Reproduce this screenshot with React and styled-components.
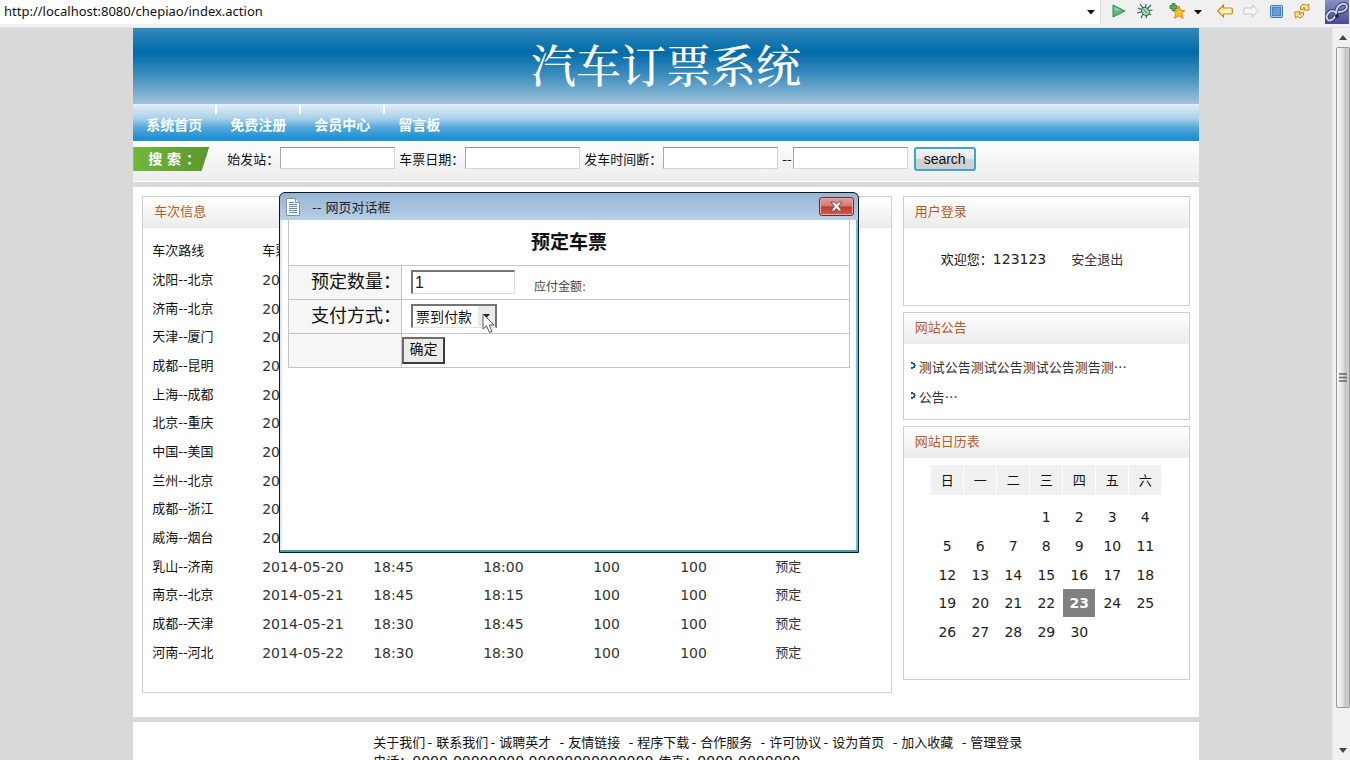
import React, { useState } from "react";
import styled, { createGlobalStyle } from "styled-components";

const NAV = ["系统首页", "免费注册", "会员中心", "留言板"];

const TICKETS = [
  ["沈阳--北京", "2014-05-20", "18:30", "18:30", 100, 100],
  ["济南--北京", "2014-05-20", "18:30", "18:30", 100, 100],
  ["天津--厦门", "2014-05-20", "18:30", "18:30", 100, 100],
  ["成都--昆明", "2014-05-20", "18:30", "18:30", 100, 100],
  ["上海--成都", "2014-05-20", "18:30", "18:30", 100, 100],
  ["北京--重庆", "2014-05-20", "18:30", "18:30", 100, 100],
  ["中国--美国", "2014-05-20", "18:30", "18:30", 100, 100],
  ["兰州--北京", "2014-05-20", "18:30", "18:30", 100, 100],
  ["成都--浙江", "2014-05-20", "18:30", "18:30", 100, 100],
  ["威海--烟台", "2014-05-20", "18:30", "18:30", 100, 100],
  ["乳山--济南", "2014-05-20", "18:45", "18:00", 100, 100],
  ["南京--北京", "2014-05-21", "18:45", "18:15", 100, 100],
  ["成都--天津", "2014-05-21", "18:30", "18:45", 100, 100],
  ["河南--河北", "2014-05-22", "18:30", "18:30", 100, 100],
];

const NOTICES = ["测试公告测试公告测试公告测告测…", "公告…"];

const WEEKDAYS = ["日", "一", "二", "三", "四", "五", "六"];

const WEEKS = [
  ["", "", "", 1, 2, 3, 4],
  [5, 6, 7, 8, 9, 10, 11],
  [12, 13, 14, 15, 16, 17, 18],
  [19, 20, 21, 22, 23, 24, 25],
  [26, 27, 28, 29, 30, "", ""],
];

const FOOTER_LINKS = [
  { text: "关于我们" },
  { text: "联系我们" },
  { text: "诚聘英才", wide: true },
  { text: "友情链接", wide: true },
  { text: "程序下载" },
  { text: "合作服务", wide: true },
  { text: "许可协议" },
  { text: "设为首页", wide: true },
  { text: "加入收藏", wide: true },
  { text: "管理登录", last: true },
];

function BrowserBar() {
  return (
    <Bar>
      <Address>
        <AddressInput
          aria-label="地址"
          defaultValue="http://localhost:8080/chepiao/index.action"
        />
        <Caret />
      </Address>
      <Tools>
        <ToolButton aria-label="run">
          <svg width="16" height="16" viewBox="0 0 16 16">
            <path d="M2 2 L14 8 L2 14 Z" fill="#5cb878" stroke="#2b8a4b" />
            <path d="M3.500 4 L10 7.500 L3.500 7.500 Z" fill="#9bd8ab" />
          </svg>
        </ToolButton>
        <ToolButton $gap={10} aria-label="debug">
          <svg width="16" height="16" viewBox="0 0 16 16">
            <path
              d="M8 8 L3 1 M8 8 L9 1 M8 8 L14 2 M8 8 L1 5 M8 8 L15.500 7 M8 8 L0 10 M8 8 L4 15 M8 8 L9.500 15 M8 8 L14 12"
              stroke="#2c5f6b"
              strokeWidth="1.200"
            />
            <ellipse
              cx="8.500"
              cy="8.500"
              rx="3.500"
              ry="4.500"
              transform="rotate(-40 8.500 8.500)"
              fill="#a5d8a0"
              stroke="#2c6b5c"
            />
            <path d="M6.500 6.500 L10.500 10.500" stroke="#3d8f66" />
          </svg>
        </ToolButton>
        <ToolButton $gap={16} aria-label="favorites">
          <svg width="16" height="16" viewBox="0 0 16 16">
            <path
              d="M10 3 L11.600 7.300 L15.700 7.700 L12.700 10.700 L14.200 15.300 L9.800 12.800 L5.300 15.300 L6.900 10.500 L4 7.700 L8.300 7.300 Z"
              fill="#ffc020"
              stroke="#e5821a"
            />
            <path
              d="M3 0.500 H6 V2.500 H8 V5.500 H6 V7.500 H3 V5.500 H1 V2.500 H3 Z"
              fill="#5aab4e"
              stroke="#2f7a3a"
              strokeWidth="0.800"
            />
          </svg>
        </ToolButton>
        <Caret $gap={9} />
        <ToolButton $gap={15} aria-label="back">
          <svg width="16" height="16" viewBox="0 0 16 16">
            <path
              d="M0.800 8 L6.500 2 V5 H14 Q15.300 5 15.300 6 V10 Q15.300 11 14 11 H6.500 V14 Z"
              fill="#fff0b8"
              stroke="#c28a1c"
              strokeWidth="1.200"
            />
          </svg>
        </ToolButton>
        <ToolButton $gap={10} aria-label="forward">
          <svg width="16" height="16" viewBox="0 0 16 16">
            <path
              d="M15.200 8 L9.500 2 V5 H2 Q0.700 5 0.700 6 V10 Q0.700 11 2 11 H9.500 V14 Z"
              fill="#f7f7f7"
              stroke="#c6c6c6"
            />
          </svg>
        </ToolButton>
        <ToolButton $gap={10} aria-label="stop">
          <svg width="16" height="16" viewBox="0 0 16 16">
            <rect x="1.500" y="2.500" width="12" height="12" rx="1" fill="#a9c6ea" stroke="#4a78b4" />
            <rect x="3.500" y="4.500" width="8" height="8" fill="#6a9ad4" stroke="#4f80be" />
          </svg>
        </ToolButton>
        <ToolButton $gap={9} aria-label="refresh">
          <svg width="16" height="16" viewBox="0 0 16 16">
            <path
              d="M6.500 6.500 Q5.500 3.500 8.500 1.500 Q11 0.500 12.500 2.500 L14.500 1 L15.300 7 L9.500 7.300 L11 5 Q9.500 3.500 8.500 6.500 Z"
              fill="#ffe08a"
              stroke="#c08a20"
            />
            <path
              d="M9.500 9.500 Q10.500 12.500 7.500 14.500 Q5 15.500 3.500 13.500 L1.500 15 L0.700 9 L6.500 8.700 L5 11 Q6.500 12.500 7.500 9.500 Z"
              fill="#ffe08a"
              stroke="#c08a20"
            />
          </svg>
        </ToolButton>
        <Logo width="24" height="24" viewBox="0 0 24 24" aria-hidden="true">
          <defs>
            <linearGradient id="logoBg" x1="0" y1="0" x2="0" y2="1">
              <stop offset="0" stopColor="#8a90c4" />
              <stop offset="1" stopColor="#464d92" />
            </linearGradient>
          </defs>
          <rect width="24" height="24" fill="url(#logoBg)" />
          <path
            d="M11 13 Q7 9 3.500 13 Q0 17 3 20 Q7 22 11 15 Q11 7 15 5 Q20 2 22 6 Q22 12 13 12"
            fill="none"
            stroke="#34396a"
            strokeWidth="4"
          />
          <path
            d="M11 13 Q7 9 3.500 13 Q0 17 3 20 Q7 22 11 15 Q11 7 15 5 Q20 2 22 6 Q22 12 13 12"
            fill="none"
            stroke="#c9cde0"
            strokeWidth="2"
          />
          <circle cx="12" cy="16" r="2" fill="#20233f" />
        </Logo>
      </Tools>
    </Bar>
  );
}

function Caret({ $gap = 0 }) {
  return (
    <CaretIcon $gap={$gap} width="8" height="5" viewBox="0 0 8 5" aria-hidden="true">
      <path d="M0 0 H8 L4 4.500 Z" fill="#111" />
    </CaretIcon>
  );
}

function SearchBar() {
  return (
    <SearchRow onSubmit={e => e.preventDefault()}>
      <SearchBadge>搜 索 ：</SearchBadge>
      <SearchLabel $first htmlFor="from">始发站：</SearchLabel>
      <SearchInput id="from" />
      <SearchLabel htmlFor="date">车票日期：</SearchLabel>
      <SearchInput id="date" />
      <SearchLabel htmlFor="start">发车时间断：</SearchLabel>
      <SearchInput id="start" />
      <SearchLabel htmlFor="end">--</SearchLabel>
      <SearchInput id="end" />
      <SearchButton type="submit">search</SearchButton>
    </SearchRow>
  );
}

function TicketTable() {
  return (
    <Tickets>
      <colgroup>
        <Col $width={119} />
        <Col $width={111} />
        <Col $width={110} />
        <Col $width={110} />
        <Col $width={87} />
        <Col $width={95} />
        <col />
      </colgroup>
      <thead>
        <tr>
          <TicketHead>车次路线</TicketHead>
          <TicketHead>车票日期</TicketHead>
          <TicketHead>发车时间</TicketHead>
          <TicketHead>到站时间</TicketHead>
          <TicketHead>票价</TicketHead>
          <TicketHead>票数</TicketHead>
          <TicketHead>操作</TicketHead>
        </tr>
      </thead>
      <tbody>
        {TICKETS.map(([route, ...values]) => (
          <TicketRow key={route}>
            <TicketCell>{route}</TicketCell>
            {values.map((value, i) => (
              <TicketCell key={i} $number>
                {value}
              </TicketCell>
            ))}
            <TicketCell>
              <TextLink href="#book">预定</TextLink>
            </TicketCell>
          </TicketRow>
        ))}
      </tbody>
    </Tickets>
  );
}

function Calendar() {
  return (
    <CalendarTable>
      <thead>
        <tr>
          {WEEKDAYS.map(day => (
            <Weekday key={day}>{day}</Weekday>
          ))}
        </tr>
      </thead>
      <tbody>
        {WEEKS.map((week, i) => (
          <Week key={i}>
            {week.map((day, j) => (
              <Day key={j} $today={day === 23}>
                {day}
              </Day>
            ))}
          </Week>
        ))}
      </tbody>
    </CalendarTable>
  );
}

function BookingDialog() {
  const [amount, setAmount] = useState("1");

  return (
    <Dialog role="dialog" aria-label="网页对话框">
      <TitleBar>
        <svg width="14" height="18" viewBox="0 0 14 18">
          <path d="M0.500 0.500 H9.500 L13.500 4.500 V17.500 H0.500 Z" fill="#fff" stroke="#8a9099" />
          <path d="M9.500 0.500 V4.500 H13.500" fill="#dde6ee" stroke="#8a9099" />
          <path
            d="M3 4.500 H8 M3 6.500 H11 M3 8.500 H11 M3 10.500 H11 M3 12.500 H11 M3 14.500 H11"
            stroke="#5c93b8"
          />
        </svg>
        <TitleText>-- 网页对话框</TitleText>
        <CloseButton aria-label="关闭">
          <svg width="13" height="11" viewBox="0 0 13 11">
            <path
              d="M1 1 H4.500 L6.500 3.200 L8.500 1 H12 L8.600 5.300 L12 10 H8.500 L6.500 7.500 L4.500 10 H1 L4.400 5.300 Z"
              fill="#fff"
              stroke="#6b4a55"
            />
          </svg>
        </CloseButton>
      </TitleBar>
      <Client>
        <BookingTable>
          <colgroup>
            <Col $width={113} />
            <col />
          </colgroup>
          <tbody>
            <tr>
              <BookingTitle colSpan={2}>预定车票</BookingTitle>
            </tr>
            <tr>
              <FieldName>
                <label htmlFor="amount">预定数量：</label>
              </FieldName>
              <Field>
                <FieldLine>
                  <AmountInput
                    id="amount"
                    value={amount}
                    onChange={e => setAmount(e.target.value)}
                  />
                  <Due>应付金额:</Due>
                </FieldLine>
              </Field>
            </tr>
            <tr>
              <FieldName>
                <label htmlFor="pay">支付方式：</label>
              </FieldName>
              <Field>
                <SelectBox>
                  <PaySelect id="pay">
                    <option>票到付款</option>
                  </PaySelect>
                  <SelectArrow>
                    <svg width="8" height="5" viewBox="0 0 8 5">
                      <path d="M0 0 H7 L3.500 4 Z" fill="#222" />
                    </svg>
                  </SelectArrow>
                  <Pointer width="14" height="21" viewBox="0 0 14 21" aria-hidden="true">
                    <path
                      d="M1 1 V16 L4.500 12.800 L7.500 19.500 L10 18.300 L7.200 12 H12 Z"
                      fill="#fff"
                      stroke="#555"
                    />
                  </Pointer>
                </SelectBox>
              </Field>
            </tr>
            <tr>
              <FieldName />
              <Field $flush>
                <OkButton>确定</OkButton>
              </Field>
            </tr>
          </tbody>
        </BookingTable>
      </Client>
    </Dialog>
  );
}

export default function App() {
  return (
    <Browser>
      <GlobalStyle />
      <BrowserBar />
      <Viewport>
        <Scroller>
          <Page>
            <Banner>汽车订票系统</Banner>
            <Nav>
              {NAV.map(item => (
                <NavLink key={item} href="#nav">
                  {item}
                </NavLink>
              ))}
            </Nav>
            <SearchBar />
            <Main>
              <Panel>
                <PanelTitle>车次信息</PanelTitle>
                <TicketTable />
              </Panel>
              <Side>
                <Panel>
                  <PanelTitle>用户登录</PanelTitle>
                  <Welcome>
                    欢迎您：<UserName>123123</UserName>
                    <TextLink href="#logout">安全退出</TextLink>
                  </Welcome>
                </Panel>
                <Panel>
                  <PanelTitle>网站公告</PanelTitle>
                  <NoticeList>
                    {NOTICES.map(notice => (
                      <Notice key={notice}>
                        <svg width="6" height="8" viewBox="0 0 6 8">
                          <path
                            d="M0 0 H2 V2 H0 Z M2 1 H4 V3 H5 V4 H4 V6 H2 V4 H3 V3 H2 Z M0 5 H2 V7 H0 Z"
                            fill="#1c4fb0"
                          />
                        </svg>
                        <TextLink href="#notice">{notice}</TextLink>
                      </Notice>
                    ))}
                  </NoticeList>
                </Panel>
                <Panel>
                  <PanelTitle>网站日历表</PanelTitle>
                  <Calendar />
                </Panel>
              </Side>
            </Main>
            <Footer>
              <FooterLine>
                {FOOTER_LINKS.map(({ text, wide, last }) => (
                  <React.Fragment key={text}>
                    <FooterLink href="#about">{text}</FooterLink>
                    {!last && <Dash $wide={wide}>-</Dash>}
                  </React.Fragment>
                ))}
              </FooterLine>
              <FooterLine>
                电话：<Phone>0000-00000000 00000000000000</Phone>
                传真：<Phone>0000-0000000</Phone>
              </FooterLine>
            </Footer>
          </Page>
        </Scroller>
        <ScrollBar>
          <ScrollArrow>
            <svg width="8" height="5" viewBox="0 0 8 5">
              <path d="M0 5 L4 0 L8 5 Z" fill="#444" />
            </svg>
          </ScrollArrow>
          <Thumb>
            <svg width="8" height="9" viewBox="0 0 8 9">
              <path d="M0 1 H8 M0 4.500 H8 M0 8 H8" stroke="#666" strokeWidth="1.500" />
            </svg>
          </Thumb>
          <ScrollTail>
            <svg width="8" height="5" viewBox="0 0 8 5">
              <path d="M0 0 L4 5 L8 0 Z" fill="#444" />
            </svg>
          </ScrollTail>
        </ScrollBar>
      </Viewport>
      <BookingDialog />
    </Browser>
  );
}

const GlobalStyle = createGlobalStyle`
  * {
    box-sizing: border-box;
  }

  body {
    margin: 0;
    overflow: hidden;
    color: #111;
    font-family: "DejaVu Sans", "Noto Sans CJK SC", sans-serif;
    font-size: 13px;
  }
`;

const Browser = styled.div`
  position: relative;
  display: flex;
  flex-direction: column;
  height: 100vh;
  overflow: hidden;
`;

const Bar = styled.div`
  display: flex;
  flex: none;
  height: 28px;
  background: #f0f0f0;
  border-bottom: 1px solid #dfe6e6;
`;

const Address = styled.div`
  display: flex;
  flex: 1;
  align-items: center;
  height: 24px;
  padding-right: 5px;
  background: #fff;
  border-right: 1px solid #e0e0e0;
`;

const AddressInput = styled.input`
  flex: 1;
  height: 22px;
  padding: 0 4px 2px;
  border: none;
  outline: none;
  background: transparent;
  color: #111;
  font-family: "Noto Sans", "Open Sans", sans-serif;
  font-size: 13px;
`;

const CaretIcon = styled.svg`
  margin-left: ${props => props.$gap}px;
`;

const Tools = styled.div`
  display: flex;
  align-items: center;
  height: 24px;
  padding: 0 1px 0 10px;
`;

const ToolButton = styled.button`
  display: flex;
  width: 16px;
  height: 18px;
  margin-left: ${props => props.$gap || 0}px;
  padding: 0;
  border: none;
  background: none;
`;

const Logo = styled.svg`
  margin-left: 15px;
`;

const Viewport = styled.div`
  display: flex;
  flex: 1;
  min-height: 0;
`;

const Scroller = styled.div`
  flex: 1;
  overflow: hidden;
  background: #d9d9d9;
`;

const Page = styled.div`
  width: 80%;
  margin: 0 auto;
`;

const Banner = styled.h1`
  height: 77px;
  margin: 0;
  border-bottom: 1px solid #e6f0f8;
  background: linear-gradient(#3389bb, #006ba9 32%, #3d8dbe 62%, #9fc3da);
  color: #fff;
  font-family: "Noto Serif CJK SC", "Noto Sans CJK SC", serif;
  font-size: 45px;
  font-weight: 500;
  line-height: 72px;
  text-align: center;
`;

const Nav = styled.nav`
  display: flex;
  height: 36px;
  background: linear-gradient(#dfebf8, #a9d0e9 38%, #55a9dc 62%, #2090d4 92%);
`;

const NavLink = styled.a`
  padding: 0 13px;
  color: #fff;
  font-size: 14px;
  font-weight: bold;
  line-height: 40px;
  text-decoration: none;

  &:not(:last-child) {
    border-right: 2px solid transparent;
    background: linear-gradient(#fff, #fff) right top / 2px 9px no-repeat border-box;
  }
`;

const SearchRow = styled.form`
  display: flex;
  align-items: flex-start;
  height: 41px;
  padding-top: 6px;
  border-bottom: 1px solid #fff;
  background: linear-gradient(#fdfdfd, #ededed);
`;

const SearchBadge = styled.div`
  width: 76px;
  height: 24px;
  padding-left: 15px;
  background: linear-gradient(90deg, #72b83a, #5c962f);
  clip-path: polygon(0 0, 100% 0, 90% 100%, 0 100%);
  color: #fff;
  font-size: 14px;
  font-weight: bold;
  line-height: 24px;
  white-space: nowrap;
`;

const SearchLabel = styled.label`
  margin: 0 1px 0 ${props => (props.$first ? 18 : 4)}px;
  line-height: 25px;
  white-space: nowrap;
`;

const SearchInput = styled.input`
  width: 115px;
  height: 22px;
  border: 1px solid #d4d6da;
  border-top-color: #8d8f94;
  border-left-color: #a6a8ac;
  background: #fff;
`;

const SearchButton = styled.button`
  width: 62px;
  height: 24px;
  margin-left: 6px;
  padding: 0;
  border: 2px solid #3aa8cc;
  border-radius: 3px;
  background: linear-gradient(#f4f4f4, #e6e6e6 50%, #d2d2d2 51%, #cfcfcf);
  color: #111;
  font-family: "Liberation Sans", sans-serif;
  font-size: 14px;
  line-height: 18px;
`;

const Main = styled.main`
  display: flex;
  gap: 11px;
  align-items: flex-start;
  margin-top: 5px;
  padding: 9px 9px 24px;
  background: #fff;
`;

const Panel = styled.section`
  flex: 1;
  border: 1px solid #cfcfcf;
  background: #fff;
`;

const PanelTitle = styled.h2`
  height: 31px;
  margin: 0;
  padding-left: 11px;
  background: linear-gradient(#fff, #ebebeb);
  color: #bd5a1e;
  font-size: 13px;
  font-weight: normal;
  line-height: 30px;
`;

const Side = styled.aside`
  display: flex;
  flex: 0 0 287px;
  flex-direction: column;
  gap: 6px;
`;

const Tickets = styled.table`
  width: 100%;
  margin: 5px 0 25px;
  border-collapse: collapse;
  table-layout: fixed;
`;

const Col = styled.col`
  width: ${props => props.$width}px;
`;

const TicketHead = styled.th`
  height: 32px;
  padding: 0;
  font-weight: normal;
  text-align: left;

  &:first-child {
    padding-left: 9px;
  }
`;

const TicketCell = styled.td`
  height: 29px;
  padding: 0;
  color: ${props => (props.$number ? "#333" : "#111")};
  font-size: ${props => (props.$number ? 14 : 13)}px;
  line-height: 20px;

  &:first-child {
    padding-left: 9px;
  }
`;

const TicketRow = styled.tr`
  &:nth-child(3n) ${TicketCell} {
    height: 28px;
  }
`;

const TextLink = styled.a`
  color: #333;
  text-decoration: none;
`;

const Welcome = styled.div`
  height: 77px;
  padding-left: 37px;
  line-height: 62px;
`;

const UserName = styled.span`
  margin-right: 25px;
  color: #222;
  font-size: 14px;
`;

const NoticeList = styled.ul`
  margin: 0;
  padding: 7px 0 8px 7px;
  font-family: "Noto Sans CJK SC", sans-serif;
  list-style: none;
`;

const Notice = styled.li`
  display: flex;
  gap: 2px;
  align-items: center;
  height: 30px;
`;

const CalendarTable = styled.table`
  margin: 6px auto 32px;
  border-spacing: 1px;
`;

const Weekday = styled.th`
  width: 32px;
  height: 30px;
  padding: 0 0 2px;
  background: #f0f0f0;
  font-weight: normal;
`;

const Day = styled.td`
  height: 28px;
  padding: 0;
  background: ${props => (props.$today ? "#808080" : "transparent")};
  color: ${props => (props.$today ? "#fff" : "#222")};
  font-size: 14px;
  font-weight: ${props => (props.$today ? "bold" : "normal")};
  line-height: 20px;
  text-align: center;
`;

const Week = styled.tr`
  &:first-child ${Day} {
    height: 35px;
    padding-top: 7px;
  }

  &:nth-child(3) ${Day} {
    height: 27px;
  }
`;

const Footer = styled.footer`
  margin-top: 5px;
  padding: 11px 0 20px 240px;
  background: #fff;
`;

const FooterLine = styled.div`
  display: flex;
  height: 19px;
  line-height: 19px;
  white-space: nowrap;
`;

const FooterLink = styled.a`
  color: #111;
  text-decoration: none;
`;

const Dash = styled.span`
  width: ${props => (props.$wide ? 17 : 11)}px;
  padding-right: 4px;
  text-align: right;
`;

const Phone = styled.span`
  margin-right: 5px;
  font-size: 14px;
`;

const ScrollBar = styled.div`
  display: flex;
  flex: 0 0 18px;
  flex-direction: column;
  padding-left: 3px;
  border-left: 1px solid #e6e6e6;
  background: #f0f0f0;
`;

const ScrollArrow = styled.div`
  display: flex;
  align-items: center;
  justify-content: center;
  height: 19px;
`;

const Thumb = styled.div`
  display: flex;
  flex: 1;
  align-items: center;
  justify-content: center;
  border: 1px solid #999;
  border-radius: 2px;
  background: linear-gradient(90deg, #f8f8f8, #e4e4e4 45%, #c2c5c8 70%, #d0d0d0);
`;

const ScrollTail = styled.div`
  display: flex;
  align-items: flex-end;
  justify-content: center;
  height: 52px;
  padding-bottom: 7px;
`;

const Dialog = styled.div`
  position: absolute;
  top: 192px;
  left: 279px;
  display: flex;
  flex-direction: column;
  width: 580px;
  height: 361px;
  overflow: hidden;
  border: 1px solid #0c1a24;
  border-radius: 6px 6px 0 0;
  background:
    linear-gradient(#96b4d2, #b7d0e8) top / 100% 27px no-repeat,
    linear-gradient(#4a9eac, #4a9eac) bottom / 100% 2px no-repeat,
    linear-gradient(90deg, #dcebf6 50%, #5cc6e6 50%);
`;

const TitleBar = styled.div`
  display: flex;
  align-items: center;
  height: 27px;
  padding: 0 4px 0 6px;
`;

const TitleText = styled.span`
  flex: 1;
  padding-left: 12px;
  color: #1a2430;
`;

const CloseButton = styled.button`
  display: flex;
  align-items: center;
  justify-content: center;
  width: 35px;
  height: 19px;
  padding: 0;
  border: 1px solid #6e2a34;
  border-radius: 3px;
  background: linear-gradient(#e0a098, #d4776c 48%, #bd3a2c 52%, #cc6250);
  box-shadow: inset 0 0 0 1px #e8a8a0;
`;

const Client = styled.div`
  flex: 1;
  margin: 0 2px 2px;
  padding: 0 6px;
  background: #fff;
`;

const BookingTable = styled.table`
  width: 100%;
  border-collapse: collapse;
  table-layout: fixed;
`;

const BookingTitle = styled.th`
  height: 45px;
  padding: 0;
  border: 1px solid #c4c4c4;
  border-top: none;
  font-size: 19px;
  line-height: 24px;
`;

const FieldName = styled.th`
  height: 34px;
  padding: 0;
  border: 1px solid #c4c4c4;
  background: #f6f6f6;
  font-size: 18px;
  font-weight: normal;
  line-height: 24px;
  text-align: right;
  white-space: nowrap;
`;

const Field = styled.td`
  padding: 0 0 0 ${props => (props.$flush ? 0 : 9)}px;
  border: 1px solid #c4c4c4;
`;

const FieldLine = styled.div`
  display: flex;
  align-items: center;
`;

const AmountInput = styled.input`
  width: 104px;
  height: 24px;
  padding: 0 2px;
  border: 1px solid #dcdcdc;
  border-top: 2px solid #747474;
  border-left: 2px solid #747474;
  color: #3a1020;
  font-family: "Liberation Sans", sans-serif;
  font-size: 16px;
`;

const Due = styled.span`
  margin-left: 19px;
  padding-top: 6px;
  color: #444;
  font-size: 12px;
`;

const SelectBox = styled.div`
  position: relative;
  display: flex;
  width: 86px;
`;

const PaySelect = styled.select`
  appearance: none;
  width: 100%;
  height: 24px;
  padding: 0 3px 2px;
  border: 2px solid #747474;
  border-bottom: 1px solid #e4e4e4;
  border-radius: 0;
  background: #fff;
  color: #111;
  font-family: "Noto Sans CJK SC", sans-serif;
  font-size: 14px;
`;

const SelectArrow = styled.span`
  position: absolute;
  top: 2px;
  right: 2px;
  display: flex;
  align-items: center;
  justify-content: center;
  width: 17px;
  height: 20px;
  background: #e9e9e9;
  pointer-events: none;
`;

const Pointer = styled.svg`
  position: absolute;
  top: 9px;
  left: 71px;
  pointer-events: none;
`;

const OkButton = styled.button`
  display: block;
  width: 43px;
  height: 27px;
  padding: 0 0 4px;
  border: 2px solid #3c3c3c;
  border-top-color: #6c6c6c;
  border-left-color: #6c6c6c;
  background: #ececec;
  color: #111;
  font-family: "Noto Sans CJK SC", sans-serif;
  font-size: 14px;
  line-height: 18px;
`;
